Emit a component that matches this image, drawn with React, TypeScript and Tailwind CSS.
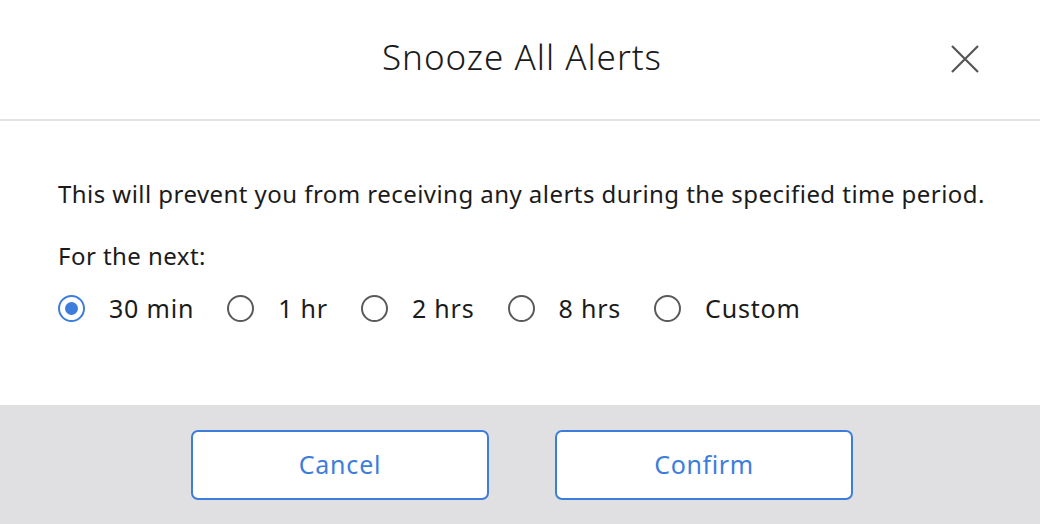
import { useState } from 'react';

const options = ['30 min', '1 hr', '2 hrs', '8 hrs', 'Custom'];

const Radio = ({ checked }: { checked: boolean }) => (
  <span
    className={`flex size-[27px] shrink-0 items-center justify-center rounded-full border-[2.5px] ${
      checked ? 'border-[#3d7ddb]' : 'border-[#5a5a5a]'
    }`}
  >
    {checked && <span className="size-[13px] rounded-full bg-[#3d7ddb]" />}
  </span>
);

const App = () => {
  const [selected, setSelected] = useState('30 min');

  return (
    <div className="flex h-[524px] w-[1040px] flex-col bg-white font-['Noto_Sans',sans-serif] text-[#1b1b1b]">
      {/* cabecera */}
      <div className="relative flex h-[121px] shrink-0 items-center justify-center border-b-2 border-[#e2e2e4] pb-[4px] pl-[4px]">
        <h1 className="text-[35px] font-light tracking-[1px] text-[#1b1b1b]">Snooze All Alerts</h1>
        <button className="absolute right-[60px] top-[44px] text-[#555]" aria-label="Close">
          <svg width="30" height="30" viewBox="0 0 30 30" fill="none" stroke="currentColor" strokeWidth="2.2">
            <path d="M2 2 L28 28 M28 2 L2 28" />
          </svg>
        </button>
      </div>

      {/* contenido */}
      <div className="flex flex-1 flex-col px-[58px] pt-[58px]">
        <p className="whitespace-nowrap text-[24px] leading-[30px] tracking-[0.45px]">
          This will prevent you from receiving any alerts during the specified time period.
        </p>
        <p className="mt-[32px] text-[24px] leading-[30px] tracking-[0.45px]">For the next:</p>
        <div className="mt-[22px] flex items-center gap-[33px]">
          {options.map((opt) => (
            <label key={opt} className="flex cursor-pointer items-center gap-[24px]" onClick={() => setSelected(opt)}>
              <Radio checked={selected === opt} />
              <span className="text-[25px] leading-[30px] tracking-[0.8px]">{opt}</span>
            </label>
          ))}
        </div>
      </div>

      {/* pie */}
      <div className="flex h-[119px] shrink-0 items-center justify-center gap-[66px] bg-[#e0e0e3] pl-[4px] pt-[1px]">
        <button className="h-[70px] w-[298px] rounded-[7px] border-2 border-[#3d7ddb] bg-white text-[25px] tracking-[0.8px] text-[#3d7ddb]">
          Cancel
        </button>
        <button className="h-[70px] w-[298px] rounded-[7px] border-2 border-[#3d7ddb] bg-white text-[25px] tracking-[0.6px] text-[#3d7ddb]">
          Confirm
        </button>
      </div>
    </div>
  );
};

export default App;
